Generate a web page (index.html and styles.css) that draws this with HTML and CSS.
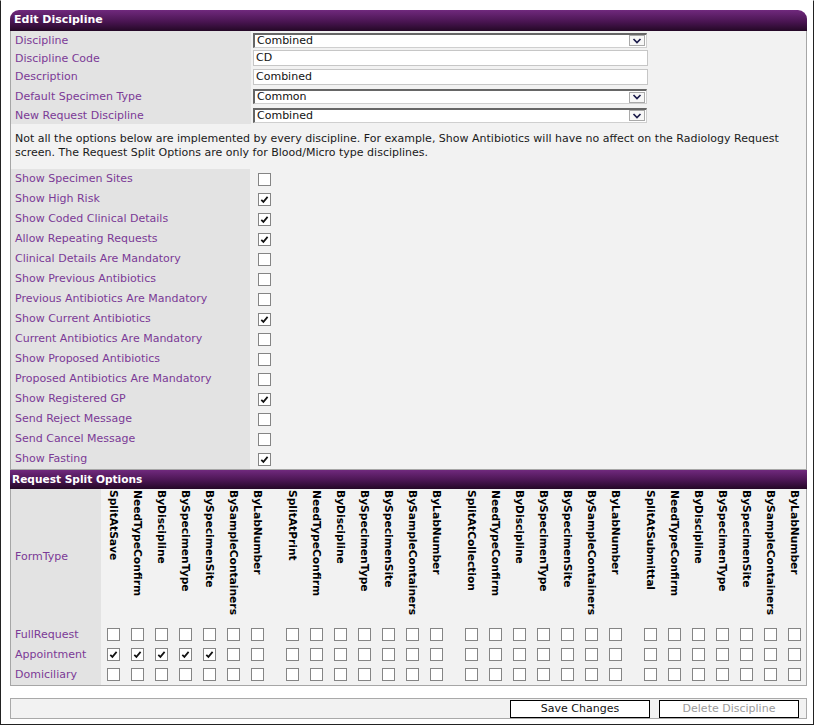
FILE: index.html
```html
<!DOCTYPE html>
<html lang="en">
<head>
  <meta charset="UTF-8" />
  <title>Edit Discipline</title>
  <link rel="stylesheet" href="styles.css">
</head>
<body>
  <div class="window">
    <div class="panel">
      <div class="panel-title">Edit Discipline</div>

      <div class="section fields">
        <div class="row"><div class="label">Discipline</div>
          <div class="value"><div class="select"><span>Combined</span><span class="arrow"><svg width="10" height="6" viewBox="0 0 10 6"><path d="M1.5 1 L5 4.5 L8.5 1" fill="none" stroke="#1c1c4c" stroke-width="1.7"/></svg></span></div></div></div>
        <div class="row"><div class="label">Discipline Code</div>
          <div class="value"><div class="input">CD</div></div></div>
        <div class="row tall"><div class="label">Description</div>
          <div class="value"><div class="input">Combined</div></div></div>
        <div class="row mid"><div class="label">Default Specimen Type</div>
          <div class="value"><div class="select"><span>Common</span><span class="arrow"><svg width="10" height="6" viewBox="0 0 10 6"><path d="M1.5 1 L5 4.5 L8.5 1" fill="none" stroke="#1c1c4c" stroke-width="1.7"/></svg></span></div></div></div>
        <div class="row"><div class="label">New Request Discipline</div>
          <div class="value"><div class="select"><span>Combined</span><span class="arrow"><svg width="10" height="6" viewBox="0 0 10 6"><path d="M1.5 1 L5 4.5 L8.5 1" fill="none" stroke="#1c1c4c" stroke-width="1.7"/></svg></span></div></div></div>
      </div>

      <div class="section note">
        <p>Not all the options below are implemented by every discipline. For example, Show Antibiotics will have no affect on the Radiology Request<br>screen. The Request Split Options are only for Blood/Micro type disciplines.</p>
      </div>

      <div class="section options" id="options"></div>

      <div class="panel-title flat">Request Split Options</div>

      <div class="section split" id="split">
        <div class="srow head" id="splitHead">
          <div class="slabel">FormType</div>
        </div>
      </div>
    </div>

    <div class="actions">
      <button class="btn">Save Changes</button>
      <button class="btn disabled">Delete Discipline</button>
    </div>
  </div>

  <script>
    const tick = '<svg width="11" height="11" viewBox="0 0 11 11"><path d="M2.3 5.8 L4.4 7.9 L8.6 2.9" fill="none" stroke="#111" stroke-width="1.7"/></svg>';
    const box = on => '<span class="cb">' + (on ? tick : '') + '</span>';

    // Options list
    const options = [
      ['Show Specimen Sites', 0], ['Show High Risk', 1], ['Show Coded Clinical Details', 1],
      ['Allow Repeating Requests', 1], ['Clinical Details Are Mandatory', 0], ['Show Previous Antibiotics', 0],
      ['Previous Antibiotics Are Mandatory', 0], ['Show Current Antibiotics', 1], ['Current Antibiotics Are Mandatory', 0],
      ['Show Proposed Antibiotics', 0], ['Proposed Antibiotics Are Mandatory', 0], ['Show Registered GP', 1],
      ['Send Reject Message', 0], ['Send Cancel Message', 0], ['Show Fasting', 1]
    ];
    document.getElementById('options').innerHTML = options.map(([name, on]) =>
      '<div class="row opt"><div class="label">' + name + '</div><div class="value">' + box(on) + '</div></div>'
    ).join('');

    // Split options grid
    const cols = ['NeedTypeConfirm', 'ByDiscipline', 'BySpecimenType', 'BySpecimenSite', 'BySampleContainers', 'ByLabNumber'];
    const groups = ['SplitAtSave', 'SplitAtPrint', 'SplitAtCollection', 'SplitAtSubmittal'];
    const head = document.getElementById('splitHead');
    groups.forEach(g => {
      head.insertAdjacentHTML('beforeend', '<div class="group">' +
        [g].concat(cols).map(c => '<div class="cell"><span class="vlabel">' + c + '</span></div>').join('') + '</div>');
    });
    const rows = [['FullRequest', []], ['Appointment', [0, 1, 2, 3, 4]], ['Domiciliary', []]];
    const split = document.getElementById('split');
    rows.forEach(([name, checked]) => {
      let html = '<div class="srow"><div class="slabel">' + name + '</div>';
      groups.forEach((g, gi) => {
        html += '<div class="group">';
        for (let i = 0; i < 7; i++) {
          html += '<div class="cell">' + box(gi === 0 && checked.includes(i)) + '</div>';
        }
        html += '</div>';
      });
      split.insertAdjacentHTML('beforeend', html + '</div>');
    });
  </script>
</body>
</html>
```

FILE: styles.css
```css
:root {
  --label: #7b3a96;
  --label-bg: #e3e3e3;
  --body-bg: #f2f2f2;
  --line: #a6a6a6;
}

* {
  margin: 0;
  padding: 0;
  box-sizing: border-box;
}

body {
  font-family: "DejaVu Sans", Verdana, sans-serif;
  font-size: 11px;
  color: #111;
  background: #fff;
}

.window {
  width: 814px;
  height: 725px;
  border: 1px solid #222;
  border-top-color: #fff;
  padding: 9px 0 0 9px;
}

.panel {
  width: 797px;
}

.panel-title {
  height: 21px;
  line-height: 20px;
  padding-left: 4px;
  color: #fff;
  font-weight: bold;
  border-radius: 9px 9px 0 0;
  background: linear-gradient(#70297d, #4a1552 55%, #240826);
}

.panel-title.flat {
  border-radius: 0;
  height: 19px;
  line-height: 19px;
  padding-left: 2px;
  font-size: 10.6px;
}

.section {
  border-left: 1px solid var(--line);
  border-right: 1px solid var(--line);
  background: var(--body-bg);
}

.row {
  display: flex;
  height: 18px;
}

.row.tall {
  height: 20px;
}

.row.mid {
  height: 19px;
}

.label {
  width: 240px;
  background: var(--label-bg);
  color: var(--label);
  padding: 1px 0 0 4px;
  line-height: 18px;
}

.value {
  flex: 1;
  padding-left: 2px;
  display: flex;
  align-items: center;
}

.select {
  width: 394px;
  height: 15px;
  background: #fff;
  border-style: solid;
  border-width: 2px 1px 1px 2px;
  border-color: #666 #cfcfcf #cfcfcf #666;
  display: flex;
  justify-content: space-between;
  align-items: center;
  padding-left: 2px;
  line-height: 12px;
}

.arrow {
  width: 16px;
  height: 11px;
  margin-right: 1px;
  border: 1px solid #a9a9a9;
  background: #f7f7f7;
  display: flex;
  align-items: center;
  justify-content: center;
}

.input {
  width: 395px;
  height: 16px;
  border: 1px solid #c6c6c6;
  background: #fff;
  padding-left: 2px;
  line-height: 14px;
}

.note {
  padding: 8px 4px 9px;
  line-height: 14px;
  color: #1a1a1a;
}

.options {
  border-bottom: 1px solid var(--line);
}

.row.opt {
  height: 20px;
}

.row.opt .label {
  padding-top: 0;
  line-height: 20px;
  width: 239px;
}

.row.opt .value {
  padding-left: 8px;
}

.cb {
  width: 13px;
  height: 13px;
  border: 1px solid #858585;
  background: #fff;
  display: flex;
  align-items: center;
  justify-content: center;
}

.split {
  border-bottom: 1px solid var(--line);
  padding-bottom: 1px;
}

.srow {
  display: flex;
  height: 20px;
}

.srow.head {
  height: 135px;
}

.slabel {
  width: 90px;
  background: var(--label-bg);
  color: var(--label);
  padding-left: 4px;
  display: flex;
  align-items: center;
}

.split .slabel {
  box-shadow: 0 1px 0 var(--label-bg);
}

.group {
  display: flex;
  margin-right: 11px;
}

.group:last-child {
  margin-right: 0;
}

.cell {
  width: 24px;
  padding-left: 6px;
  display: flex;
  align-items: center;
}

.head .cell {
  align-items: flex-start;
  padding-top: 1px;
}

.vlabel {
  writing-mode: vertical-rl;
  font-weight: bold;
  font-size: 10.7px;
  line-height: 12px;
  color: #000;
}

.actions {
  width: 797px;
  height: 21px;
  margin-top: 12px;
  border: 1px solid #a9a9a9;
  background: var(--body-bg);
  display: flex;
  justify-content: flex-end;
  align-items: center;
  gap: 9px;
  padding-right: 7px;
}

.btn {
  width: 140px;
  height: 18px;
  background: #fff;
  border: 1px solid #000;
  font-family: "DejaVu Sans", Verdana, sans-serif;
  font-size: 11px;
  color: #111;
}

.btn.disabled {
  color: #9a9a9a;
}
```
